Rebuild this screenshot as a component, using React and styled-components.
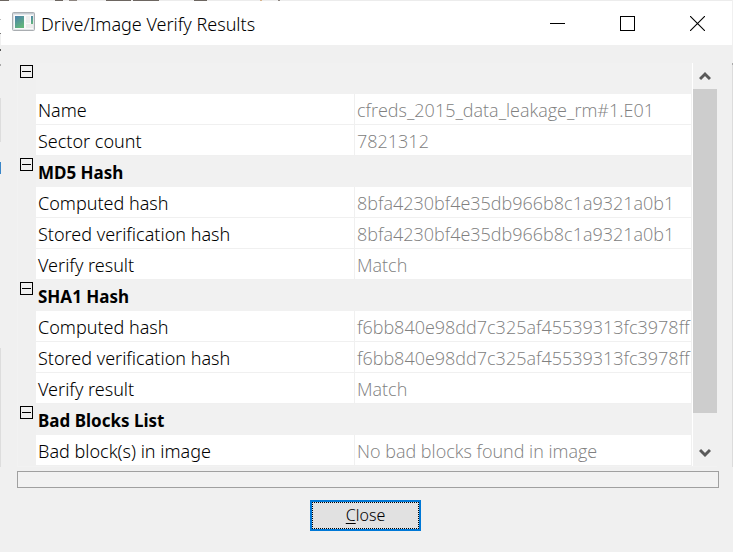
import React, { useState } from "react";
import styled, { createGlobalStyle } from "styled-components";

const GlobalStyle = createGlobalStyle`
  *, *::before, *::after { box-sizing: border-box; }
  body {
    margin: 0;
    background: #f0f0f0;
    color: #000;
    font: 300 18px/24px "Noto Sans", "Open Sans", sans-serif;
  }
  button { font: inherit; color: inherit; }
`;

/* The desktop shows as a one pixel rim around the dialog. */
const Desktop = styled.div`
  min-height: 100vh;
  display: flex;
  padding: 1px 1px 0;
  background:
    linear-gradient(90deg, #6d6661 0 9px, transparent 9px 55px, #6d6661 55px 63px, transparent 63px 69px, #8d8580 69px 77px, transparent 77px 106px, #6d6661 106px 131px, transparent 131px 133px, #6d6661 133px 159px, transparent 159px 194px, #6d6661 194px 207px, transparent 207px 260px, #d8b48c 260px 262px, transparent 262px 278px, #8d8580 278px 280px, transparent 280px) top / 100% 1px no-repeat,
    linear-gradient(#fff 0 19px, #bbb 19px 20px, #fff 20px 33px, #777 33px 34px, #f0f0f0 34px 49px, #555 49px 51px, #f0f0f0 51px 64px, #aaa 64px 66px, #f0f0f0 66px 98px, #ddd 98px 142px, #f0f0f0 142px 162px, #3a86c8 162px 174px, #f0f0f0 174px 348px, #ddd 348px 467px, #f0f0f0 467px) left / 1px 100% no-repeat,
    linear-gradient(#f0f0f0 0 63px, #aaa 63px 65px, #dcdcdc 65px 467px, #f0f0f0 467px) right / 1px 100% no-repeat,
    #ececec;
`;

const Dialog = styled.main`
  flex: 1;
  min-width: 0;
  display: flex;
  flex-direction: column;
  background: #f0f0f0;
`;

const TitleBar = styled.header`
  display: flex;
  align-items: center;
  height: 44px;
  padding-left: 11px;
  background: #fff;
`;

const AppIcon = styled.svg`
  flex: none;
  width: 23px;
  height: 19px;
  margin-bottom: 4px;
`;

const Title = styled.h1`
  flex: 1;
  margin: 0;
  padding: 2px 0 0 6px;
  font: inherit;
  white-space: nowrap;
`;

const CaptionButton = styled.button`
  width: 70px;
  height: 44px;
  padding: 0;
  border: 0;
  background: transparent;
  display: grid;
  place-items: center;
`;

const Content = styled.div`
  display: flex;
  flex-direction: column;
  padding: 18px 13px 20px 16px;
`;

const GridPane = styled.section`
  display: flex;
  margin-right: 2px;
  border: 0 solid #f2f2f2;
  border-width: 0 0 1px 1px;
`;

const PropertyTable = styled.table`
  flex: 1;
  min-width: 0;
  table-layout: fixed;
  border-collapse: separate;
  border-spacing: 0;
`;

const GutterCol = styled.col`
  width: 18px;
`;

const NameCol = styled.col`
  width: 319px;
`;

const Gutter = styled.td`
  height: 31px;
  padding: 2px 2px 0;
  vertical-align: top;
  background: #f0f0f0;
`;

const Toggle = styled.button`
  display: block;
  width: 13px;
  height: 13px;
  padding: 0;
  border: 1px solid #000;
  background: #f0f0f0;
`;

const ToggleMark = styled.svg`
  display: block;
  width: 11px;
  height: 11px;
`;

const CategoryName = styled.th`
  height: 31px;
  padding: 3px 2px 0;
  font-size: 17px;
  font-weight: 700;
  text-align: left;
  background: #f1f1f1;
`;

const PropertyName = styled.th`
  height: 31px;
  padding: 1px 2px 0;
  border: 0 solid #f0f0f0;
  border-width: 0 1px 1px 0;
  background: #fff;
  font-weight: inherit;
  text-align: left;
  white-space: nowrap;
`;

const PropertyValue = styled.td`
  height: 31px;
  padding: 1px 0 0 2px;
  border: 0 solid #f0f0f0;
  border-width: 0 1px 1px 0;
  background: #fff;
  color: #808080;
  font-family: "Open Sans", "Noto Sans", sans-serif;
  white-space: nowrap;
  overflow: hidden;
`;

const ScrollBar = styled.div`
  flex: none;
  display: flex;
  flex-direction: column;
  width: 25px;
  border-left: 1px solid #fff;
`;

const ScrollButton = styled.button`
  flex: none;
  display: grid;
  place-items: center;
  height: 26px;
  padding: 0;
  border: 0;
  background: #f0f0f0;
`;

const ScrollTrack = styled.div`
  flex: 1;
`;

const ScrollThumb = styled.div`
  height: 92.4%;
  background: #cdcdcd;
`;

const StatusStrip = styled.div`
  height: 17px;
  margin-top: 4px;
  border: 1px solid #a0a0a0;
  background: #f2f2f2;
`;

const Footer = styled.footer`
  display: flex;
  justify-content: center;
  padding: 12px 5px 0 0;
`;

const CloseButton = styled.button`
  width: 111px;
  height: 31px;
  padding: 0;
  border: 2px solid #0078d7;
  background: #e1e1e1;
  font-size: 16px;
  line-height: 25px;
`;

const FocusRing = styled.span`
  display: block;
  border: 1px dotted #000;
`;

const AccessKey = styled.span`
  text-decoration: underline;
  text-underline-offset: 2px;
`;

const groups = [
  {
    title: "",
    rows: [
      ["Name", "cfreds_2015_data_leakage_rm#1.E01"],
      ["Sector count", "7821312"],
    ],
  },
  {
    title: "MD5 Hash",
    rows: [
      ["Computed hash", "8bfa4230bf4e35db966b8c1a9321a0b1"],
      ["Stored verification hash", "8bfa4230bf4e35db966b8c1a9321a0b1"],
      ["Verify result", "Match"],
    ],
  },
  {
    title: "SHA1 Hash",
    rows: [
      ["Computed hash", "f6bb840e98dd7c325af45539313fc3978ff"],
      ["Stored verification hash", "f6bb840e98dd7c325af45539313fc3978ff"],
      ["Verify result", "Match"],
    ],
  },
  {
    title: "Bad Blocks List",
    rows: [["Bad block(s) in image", "No bad blocks found in image"]],
  },
];

function Group({ title, rows }) {
  const [open, setOpen] = useState(true);
  return (
    <tbody>
      <tr>
        <Gutter>
          <Toggle
            type="button"
            aria-expanded={open}
            aria-label={title || "General"}
            onClick={() => setOpen(!open)}
          >
            <ToggleMark viewBox="0 0 11 11" shapeRendering="crispEdges">
              <path d={open ? "M1 5.5h9" : "M1 5.5h9M5.5 1v9"} stroke="#000" />
            </ToggleMark>
          </Toggle>
        </Gutter>
        <CategoryName colSpan={2} scope="rowgroup">{title}</CategoryName>
      </tr>
      {open &&
        rows.map(([name, value]) => (
          <tr key={name}>
            <Gutter />
            <PropertyName scope="row">{name}</PropertyName>
            <PropertyValue>{value}</PropertyValue>
          </tr>
        ))}
    </tbody>
  );
}

export default function App() {
  return (
    <>
      <GlobalStyle />
      <Desktop>
        <Dialog>
          <TitleBar>
            <AppIcon viewBox="0 0 23 19" aria-hidden="true">
              <defs>
                <linearGradient id="pane" x1="0" y1="0" x2="0.5" y2="1">
                  <stop offset="0" stopColor="#4b7fae" />
                  <stop offset="1" stopColor="#62b57c" />
                </linearGradient>
              </defs>
              <rect x="0.5" y="0.5" width="22" height="18" rx="1" fill="#e1e4e7" stroke="#a9adb1" />
              <path d="M1 1.5h21" stroke="#c5ccd3" />
              <rect x="2" y="3" width="19" height="14" fill="#fafafa" />
              <rect x="3" y="4" width="9" height="12" fill="url(#pane)" />
              <rect x="14" y="4" width="4" height="7" fill="#eeeeee" />
              <rect x="19" y="4" width="2" height="8" fill="url(#pane)" />
              <rect x="14" y="12" width="7" height="4" fill="#ececec" />
            </AppIcon>
            <Title>Drive/Image Verify Results</Title>
            <CaptionButton type="button" aria-label="Minimize">
              <svg width="15" height="15" shapeRendering="crispEdges">
                <path d="M0 7.5h15" stroke="#000" />
              </svg>
            </CaptionButton>
            <CaptionButton type="button" aria-label="Maximize">
              <svg width="15" height="15" shapeRendering="crispEdges">
                <rect x="0.5" y="0.5" width="14" height="14" fill="none" stroke="#000" />
              </svg>
            </CaptionButton>
            <CaptionButton type="button" aria-label="Close window">
              <svg width="15" height="15">
                <path d="M0 0l15 15M15 0L0 15" stroke="#000" strokeWidth="1.1" />
              </svg>
            </CaptionButton>
          </TitleBar>
          <Content>
            <GridPane>
              <PropertyTable aria-label="Verify results">
                <colgroup>
                  <GutterCol />
                  <NameCol />
                  <col />
                </colgroup>
                {groups.map((group) => (
                  <Group key={group.title} {...group} />
                ))}
              </PropertyTable>
              <ScrollBar>
                <ScrollButton type="button" aria-label="Scroll up">
                  <svg width="12" height="10">
                    <path d="M1 8l5-5 5 5" fill="none" stroke="#5a5a5a" strokeWidth="3" />
                  </svg>
                </ScrollButton>
                <ScrollTrack>
                  <ScrollThumb />
                </ScrollTrack>
                <ScrollButton type="button" aria-label="Scroll down">
                  <svg width="12" height="10">
                    <path d="M1 2l5 5 5-5" fill="none" stroke="#5a5a5a" strokeWidth="3" />
                  </svg>
                </ScrollButton>
              </ScrollBar>
            </GridPane>
            <StatusStrip />
            <Footer>
              <CloseButton type="button">
                <FocusRing>
                  <AccessKey>C</AccessKey>lose
                </FocusRing>
              </CloseButton>
            </Footer>
          </Content>
        </Dialog>
      </Desktop>
    </>
  );
}
